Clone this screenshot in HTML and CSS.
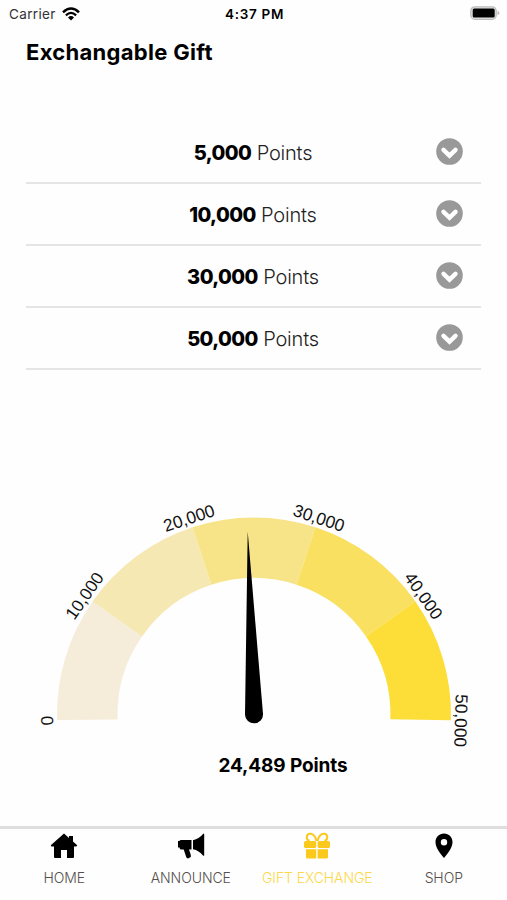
FILE: index.html
```html
<!DOCTYPE html>
<html lang="en">
<head>
    <meta charset="UTF-8">
    <meta name="viewport" content="width=device-width, initial-scale=1.0">
    <title>Exchangable Gift</title>
    <link rel="stylesheet" href="styles.css">
</head>
<body>
    <div class="status">
        <div class="carrier">
            <span>Carrier</span>
            <svg width="18" height="14" viewBox="0 0 18 14">
                <path d="M1 5.3 Q9 -2.3 17 5.3" fill="none" stroke="#000" stroke-width="2.5"/>
                <path d="M3.9 8.3 Q9 3.5 14.1 8.3" fill="none" stroke="#000" stroke-width="2.3"/>
                <path d="M6 10.5 Q9 7.7 12 10.5 L9 13.6 Z"/>
            </svg>
        </div>
        <div class="time">4:37 PM</div>
        <svg class="battery" width="31" height="15" viewBox="0 0 31 15">
            <rect x="1.8" y="0.9" width="25.4" height="12.4" rx="4" fill="#e4e4e4" stroke="#bbb" stroke-width="1.3"/>
            <rect x="3.7" y="2.6" width="22" height="9" rx="1.5"/>
            <path d="M28.5 4.5 Q32.5 6.9 28.5 9.3 Z" fill="#bbb"/>
        </svg>
    </div>

    <h1>Exchangable Gift</h1>

    <div class="list">
        <div class="row">
            <p class="points"><b>5,000</b> <span>Points</span></p>
            <svg class="arrow" width="27" height="27" viewBox="0 0 27 27"><circle cx="13.5" cy="13.5" r="13.3"/><path d="M7.5 11.8 L13.5 17.6 L19.5 11.8"/></svg>
        </div>
        <div class="row">
            <p class="points"><b>10,000</b> <span>Points</span></p>
            <svg class="arrow" width="27" height="27" viewBox="0 0 27 27"><circle cx="13.5" cy="13.5" r="13.3"/><path d="M7.5 11.8 L13.5 17.6 L19.5 11.8"/></svg>
        </div>
        <div class="row">
            <p class="points"><b>30,000</b> <span>Points</span></p>
            <svg class="arrow" width="27" height="27" viewBox="0 0 27 27"><circle cx="13.5" cy="13.5" r="13.3"/><path d="M7.5 11.8 L13.5 17.6 L19.5 11.8"/></svg>
        </div>
        <div class="row">
            <p class="points"><b>50,000</b> <span>Points</span></p>
            <svg class="arrow" width="27" height="27" viewBox="0 0 27 27"><circle cx="13.5" cy="13.5" r="13.3"/><path d="M7.5 11.8 L13.5 17.6 L19.5 11.8"/></svg>
        </div>
    </div>

    <!-- origin is the needle pivot -->
    <svg class="gauge" width="507" height="257" viewBox="-254 -224.5 507 257">
        <path fill="#f5edda" d="M-196.9 5.4 A197 197 0 0 1 -161.4 -113 L-112 -78.1 A136.5 136.5 0 0 0 -136.4 5 Z"/>
        <path fill="#f6e8b2" d="M-161.4 -113 A197 197 0 0 1 -61.5 -187.2 L-42.6 -129.7 A136.5 136.5 0 0 0 -112 -78.1 Z"/>
        <path fill="#f8e488" d="M-61.5 -187.2 A197 197 0 0 1 61.5 -187.2 L42.6 -129.7 A136.5 136.5 0 0 0 -42.6 -129.7 Z"/>
        <path fill="#fae060" d="M61.5 -187.2 A197 197 0 0 1 161.4 -113 L112 -78.1 A136.5 136.5 0 0 0 42.6 -129.7 Z"/>
        <path fill="#fddd37" d="M161.4 -113 A197 197 0 0 1 196.9 5.7 L136.4 4.8 A136.5 136.5 0 0 0 112 -78.1 Z"/>
        <g class="ticks">
            <text transform="rotate(-91.7)" y="-201">0</text>
            <text transform="rotate(-55)" y="-201">10,000</text>
            <text transform="rotate(-18.3)" y="-201">20,000</text>
            <text transform="rotate(18.3)" y="-201">30,000</text>
            <text transform="rotate(55)" y="-201">40,000</text>
            <text transform="rotate(91.7)" y="-201">50,000</text>
        </g>
        <path d="M-6.3 -183 L9 -0.5 A9 9 0 0 1 -9 0.2 Z"/>
    </svg>
    <p class="total">24,489 Points</p>

    <nav class="tabs">
        <div class="tab">
            <svg width="28" height="28" viewBox="0 0 28 28">
                <path d="M14 1.5 L19 6 V4 H23 V9.5 L27.2 13.3 L26.4 14.5 H24 V25 Q24 26 23 26 H17 V18 H11 V26 H5 Q4 26 4 25 V14.5 H1.4 L0.8 13.3 Z"/>
            </svg>
            <span>HOME</span>
        </div>
        <div class="tab">
            <svg width="28" height="28" viewBox="0 0 28 28">
                <path d="M1 9 H2.5 Q2.7 8 4 8 H14.5 V17.5 H12 L13.8 23 V25 L11.5 26.3 Q9.7 26.7 9.2 25 L6.7 17.5 H4 Q2.7 17.5 2.5 15.5 H1 Z"/>
                <path d="M16 8.2 Q22 7 26 2 Q27.2 1 27.2 2.5 V23 Q27.2 24.5 26 23.4 Q22 18.5 16 17.3 Z"/>
            </svg>
            <span>ANNOUNCE</span>
        </div>
        <div class="tab active">
            <svg width="28" height="28" viewBox="0 0 28 28">
                <rect x="1" y="9" width="12.2" height="7" rx="1.5"/>
                <rect x="14.6" y="9" width="12.4" height="7" rx="1.5"/>
                <path d="M3 17.3 H13.2 V26.5 H4.5 Q3 26.5 3 25 Z M14.6 17.3 H25 V25 Q25 26.5 23.5 26.5 H14.6 Z"/>
                <path d="M13.5 9 C12.5 4 9.5 1.2 6.5 1.8 C3 2.5 2.7 7.8 6.5 9 M14.5 9 C15.5 4 18.5 1.2 21.5 1.8 C25 2.5 25.3 7.8 21.5 9" fill="none" stroke="#fbc91b" stroke-width="2"/>
            </svg>
            <span>GIFT EXCHANGE</span>
        </div>
        <div class="tab">
            <svg width="28" height="28" viewBox="0 0 28 28">
                <path fill-rule="evenodd" d="M14 1.5 C9 1.5 5.5 5.2 5.5 10 C5.5 15.5 9.5 20.5 14 26 C18.5 20.5 22.5 15.5 22.5 10 C22.5 5.2 19 1.5 14 1.5 Z M14 7 A3.2 3.2 0 1 1 14 13.4 A3.2 3.2 0 1 1 14 7 Z"/>
            </svg>
            <span>SHOP</span>
        </div>
    </nav>
</body>
</html>
```
FILE: styles.css
```css
* {
    box-sizing: border-box;
}
body {
    margin: 0;
    width: 507px;
    height: 900px;
    overflow: hidden;
    display: flex;
    flex-direction: column;
    background: #fefefe;
    font-family: Inter, "Open Sans", sans-serif;
    color: #000;
}
svg {
    display: block;
    flex-shrink: 0;
}
.status {
    height: 27px;
    padding: 0 7px 0 9px;
    display: grid;
    grid-template-columns: 1fr auto 1fr;
    align-items: center;
    font-size: 13.5px;
}
.carrier {
    display: flex;
    align-items: center;
    gap: 6px;
    color: #333;
    letter-spacing: 0.35px;
}
.time {
    font-weight: 600;
    letter-spacing: 0.7px;
}
.battery {
    justify-self: end;
}
h1 {
    margin: 9px 0 0 26px;
    height: 32px;
    line-height: 32px;
    font-size: 22px;
    font-weight: 700;
    letter-spacing: 0.3px;
    white-space: nowrap;
}
.list {
    margin: 54px 26px 0;
}
.row {
    height: 62px;
    padding: 0 18px 0 44px;
    display: flex;
    align-items: center;
    border-bottom: 2px solid #e5e5e5;
}
.points {
    flex: 1;
    margin: 0;
    padding-top: 2px;
    text-align: center;
    font-size: 20px;
    letter-spacing: -0.2px;
}
.points b {
    font-weight: 800;
    letter-spacing: -0.6px;
}
.points span {
    font-weight: 300;
    color: #222;
}
.arrow {
    margin-bottom: 2px;
    fill: #999;
}
.arrow path {
    fill: none;
    stroke: #fff;
    stroke-width: 4.4;
    stroke-linecap: round;
}
.gauge {
    margin-top: 120px;
}
.ticks {
    font-family: "Liberation Sans", Arial, sans-serif;
    font-size: 17.3px;
    text-anchor: middle;
    fill: #111;
}
.total {
    margin: 4px 0 0 59px;
    height: 30px;
    line-height: 30px;
    text-align: center;
    font-size: 19px;
    font-weight: 700;
    letter-spacing: -0.1px;
}
.tabs {
    margin-top: auto;
    height: 74px;
    padding-left: 1px;
    display: grid;
    grid-template-columns: repeat(4, 1fr);
    border-top: 3px solid #dedede;
}
.tab {
    display: flex;
    flex-direction: column;
    align-items: center;
    padding-top: 3px;
    font-size: 14px;
    font-weight: 300;
    color: #554f4d;
    white-space: nowrap;
}
.tab span {
    margin-top: 9px;
    line-height: 18px;
    letter-spacing: -0.1px;
}
.active {
    fill: #fbc91b;
    color: #fbd84a;
}
```
